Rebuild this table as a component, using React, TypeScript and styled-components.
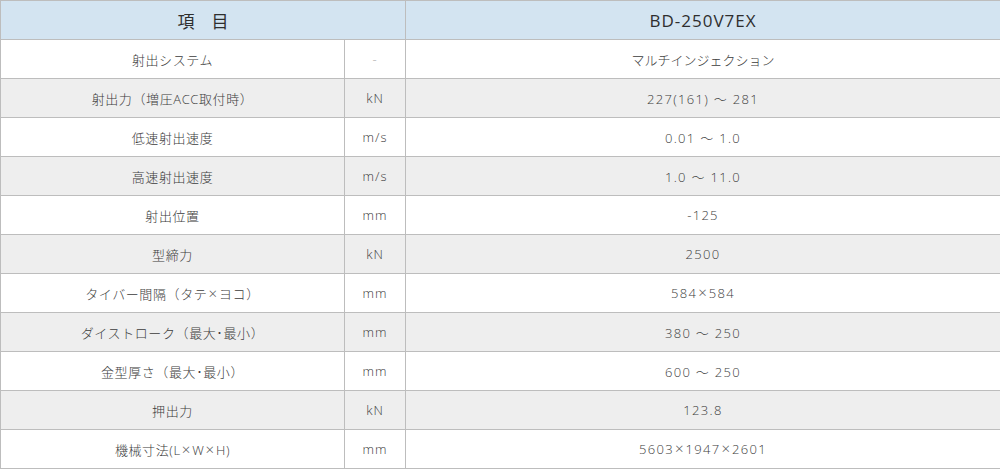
import React from "react";
import styled, { createGlobalStyle } from "styled-components";

const Global = createGlobalStyle`
  html, body { margin: 0; padding: 0; background: #fff; }
  body { font-family: "Open Sans", "Noto Sans CJK JP", sans-serif; }
`;

const Table = styled.table`
  width: 1000px;
  border-collapse: collapse;
  table-layout: fixed;
  font-family: "Open Sans", "Noto Sans CJK JP", sans-serif;
  color: #4a4a4a;
`;

const HeadCell = styled.th<{ $latin?: boolean }>`
  height: 38px;
  padding: 0;
  border: 1px solid #bdbdbd;
  background: #d3e4f1;
  font-weight: 400;
  font-size: 17px;
  letter-spacing: ${(p) => (p.$latin ? "1px" : "0")};
  color: #2e2e2e;
  text-align: center;
  vertical-align: middle;
`;

const Row = styled.tr<{ $alt: boolean }>`
  background: ${(p) => (p.$alt ? "#eeeeee" : "#ffffff")};
`;

type Kind = "label" | "unit" | "value" | "kana";

const spacing: Record<Kind, string> = {
  label: "0.6px",
  unit: "1px",
  value: "1.3px",
  kana: "0",
};

const Cell = styled.td<{ $kind: Kind; $muted?: boolean }>`
  height: 38px;
  padding: 0;
  border: 1px solid #bdbdbd;
  font-size: 13px;
  font-weight: 300;
  text-align: center;
  vertical-align: middle;
  color: ${(p) => (p.$muted ? "#a8a8a8" : "#3c3c3c")};
  letter-spacing: ${(p) => spacing[p.$kind]};
  white-space: nowrap;
`;

const Times = styled.span`
  font-family: "Open Sans", sans-serif;
  font-size: 15px;
  font-weight: 300;
  line-height: 1;
  margin: 0 2px 0 1px;
  letter-spacing: 0;
  color: #555;
`;

const rows: [string, string, string][] = [
  ["射出システム", "-", "マルチインジェクション"],
  ["射出力（増圧ACC取付時）", "kN", "227(161) ～ 281"],
  ["低速射出速度", "m/s", "0.01 ～ 1.0"],
  ["高速射出速度", "m/s", "1.0 ～ 11.0"],
  ["射出位置", "mm", "-125"],
  ["型締力", "kN", "2500"],
  ["タイバー間隔（タテ×ヨコ）", "mm", "584×584"],
  ["ダイストローク（最大･最小）", "mm", "380 ～ 250"],
  ["金型厚さ（最大･最小）", "mm", "600 ～ 250"],
  ["押出力", "kN", "123.8"],
  ["機械寸法(L×W×H)", "mm", "5603×1947×2601"],
];

function withTimes(text: string) {
  const parts = text.split("×");
  return parts.map((p, i) => (
    <React.Fragment key={i}>
      {i > 0 && <Times>×</Times>}
      {p}
    </React.Fragment>
  ));
}

const isLatin = (s: string) => /^[\x00-\x7F×～ ]*$/.test(s);

export default function App() {
  return (
    <>
      <Global />
      <Table>
        <colgroup>
          <col style={{ width: 344 }} />
          <col style={{ width: 61 }} />
          <col style={{ width: 595 }} />
        </colgroup>
        <thead>
          <tr>
            <HeadCell colSpan={2}>項　目</HeadCell>
            <HeadCell $latin>BD-250V7EX</HeadCell>
          </tr>
        </thead>
        <tbody>
          {rows.map((r, i) => (
            <Row key={i} $alt={i % 2 === 1}>
              <Cell $kind="label">{withTimes(r[0])}</Cell>
              <Cell $kind="unit" $muted={r[1] === "-"}>
                {r[1]}
              </Cell>
              <Cell $kind={isLatin(r[2]) ? "value" : "kana"}>
                {withTimes(r[2])}
              </Cell>
            </Row>
          ))}
        </tbody>
      </Table>
    </>
  );
}
